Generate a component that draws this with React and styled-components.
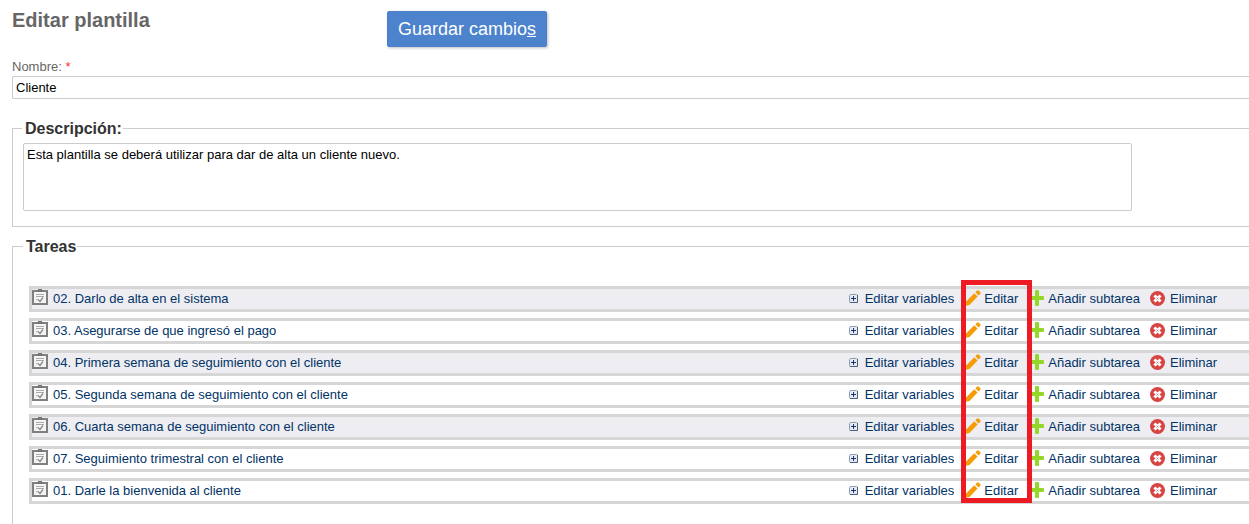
import React from 'react';
import styled, { createGlobalStyle } from 'styled-components';

const GlobalStyle = createGlobalStyle`
  *, *::before, *::after { box-sizing: border-box; }
  body {
    margin: 0;
    background: #fff;
    color: #666;
    font: 13px/16px "Liberation Sans", Arial, sans-serif;
  }
`;

const Form = styled.form`
  display: flex;
  flex-direction: column;
  padding: 8px 0 0 12px;
`;

const Header = styled.header`
  display: flex;
  align-items: flex-start;
  padding-bottom: 11px;
`;

const Title = styled.h1`
  flex: 0 0 375px;
  margin: 0;
  color: #666;
  font-size: 20px;
  line-height: 24px;
`;

const SaveButton = styled.button`
  height: 36px;
  margin-top: 3px;
  padding: 0 10px;
  border: 1px solid #4b80cc;
  border-radius: 2px;
  background: #4d82cd;
  box-shadow: 1px 1px 3px rgba(0, 0, 0, 0.25);
  color: #fff;
  font: 18px/24px "Liberation Sans", Arial, sans-serif;
  white-space: nowrap;
  cursor: pointer;
`;

const Label = styled.label`
  line-height: 18px;
`;

const Required = styled.span`
  color: #f33;
`;

const NameInput = styled.input`
  width: 100%;
  height: 23px;
  padding: 0 3px;
  border: 1px solid #ccc;
  border-right: 0;
  border-radius: 2px 0 0 2px;
  background: #fff;
  color: #000;
  font: inherit;
`;

const Group = styled.fieldset`
  min-width: 0;
  margin: ${(p) => p.$top}px 0 0;
  padding: ${(p) => p.$pad};
  border: 1px solid #ccc;
  border-right: 0;
  ${(p) => p.$open && 'border-bottom: 0;'}
`;

const Legend = styled.legend`
  margin-left: ${(p) => p.$indent}px;
  padding: 2px 1px 0 3px;
  color: #333;
  font-size: 16px;
  font-weight: bold;
  line-height: 18px;
`;

const Description = styled.textarea`
  display: block;
  width: calc(100% - 117px);
  height: 68px;
  padding: 3px;
  border: 1px solid #ccc;
  border-radius: 2px;
  background: #fff;
  color: #000;
  font: inherit;
  resize: none;
`;

const TaskList = styled.ul`
  position: relative;
  display: flex;
  flex-direction: column;
  gap: 6px;
  margin: 0;
  padding: 0;
  list-style: none;
`;

const TaskRow = styled.li`
  display: flex;
  align-items: center;
  justify-content: space-between;
  height: 26px;
  padding-right: 32px;
  border: 3px solid #d6d6d6;
  border-right: 0;
  background: ${(p) => (p.$shaded ? '#eeedf2' : '#fff')};
`;

const TaskLink = styled.a`
  display: flex;
  align-items: flex-start;
  gap: 5px;
  height: 20px;
  color: #036;
  line-height: 20px;
  text-decoration: none;
`;

const Actions = styled.div`
  display: flex;
  gap: 11px;
`;

const ActionLink = styled.a`
  display: flex;
  align-items: flex-start;
  gap: 3px;
  color: #036;
  line-height: 20px;
  text-decoration: none;
  white-space: nowrap;

  svg {
    margin-top: 1px;
    overflow: visible;
  }
`;

const Highlight = styled.li`
  position: absolute;
  top: -6px;
  right: 217px;
  bottom: 1px;
  width: 71px;
  border: 5px solid #ed1c24;
  pointer-events: none;
`;

const ClipboardIcon = () => (
  <svg width="16" height="16" viewBox="0 0 16 16" aria-hidden="true">
    <path d="M1 2h14v13H1z" fill="#f4f4f6" stroke="#808080" strokeWidth="2" />
    <path d="M5 1h1V0h4v1h1v2H5z" fill="#777" />
    <path d="M4 5.500h8M4 7.500h8" stroke="#aaa" />
    <path d="M4 10.500h2" stroke="#bbb" />
    <path d="M6 10.500l2 2 3-4" fill="none" stroke="#888" strokeWidth="1.300" />
  </svg>
);

const ExpandIcon = () => (
  <svg width="16" height="16" viewBox="0 0 16 16" aria-hidden="true">
    <rect x="3.500" y="4.500" width="8" height="8" rx="1" fill="#e5eaf2" stroke="#8f9bb2" />
    <path d="M11.500 5v7.500H4" fill="none" stroke="#4c5c7b" />
    <path d="M5 8.500h5M7.500 6v5" stroke="#173464" />
  </svg>
);

const PencilIcon = () => (
  <svg width="16" height="16" viewBox="0 0 16 16" aria-hidden="true">
    <path d="M0 16l1-4.500L9.300 3.200l3.300 3.300L4.500 15z" fill="#f49c09" />
    <path d="M10.300 2.200L11.800.7q1-.9 2 0l1.400 1.400q.9 1 0 2L13.700 5.600z" fill="#f49c09" />
  </svg>
);

const PlusIcon = () => (
  <svg width="16" height="16" viewBox="0 0 16 16" aria-hidden="true">
    <path d="M7 0h2q1 0 1 1v5h4q1 0 1 1v2q0 1-1 1h-4v5q0 1-1 1H7q-1 0-1-1v-5H0V6h6V1q0-1 1-1z" fill="#92d927" />
  </svg>
);

const RemoveIcon = () => (
  <svg width="16" height="16" viewBox="0 0 16 16" aria-hidden="true">
    <circle cx="6.500" cy="8.500" r="7.500" fill="#d64543" />
    <path d="M4.500 6.500l4 4M8.500 6.500l-4 4" stroke="#fff" strokeWidth="3" strokeLinecap="square" />
    <path d="M5.500 7.500l2 2M7.500 7.500l-2 2" stroke="#d64543" strokeWidth="0.500" />
  </svg>
);

const tasks = [
  { name: '02. Darlo de alta en el sistema', shaded: true },
  { name: '03. Asegurarse de que ingresó el pago' },
  { name: '04. Primera semana de seguimiento con el cliente', shaded: true },
  { name: '05. Segunda semana de seguimiento con el cliente' },
  { name: '06. Cuarta semana de seguimiento con el cliente', shaded: true },
  { name: '07. Seguimiento trimestral con el cliente' },
  { name: '01. Darle la bienvenida al cliente' },
];

const actions = [
  { label: 'Editar variables', Icon: ExpandIcon },
  { label: 'Editar', Icon: PencilIcon },
  { label: 'Añadir subtarea', Icon: PlusIcon },
  { label: 'Eliminar', Icon: RemoveIcon },
];

export default function App() {
  return (
    <>
      <GlobalStyle />
      <Form onSubmit={(e) => e.preventDefault()}>
        <Header>
          <Title>Editar plantilla</Title>
          <SaveButton type="submit" accessKey="s">
            Guardar cambio<u>s</u>
          </SaveButton>
        </Header>
        <Label htmlFor="nombre">
          Nombre: <Required>*</Required>
        </Label>
        <NameInput id="nombre" type="text" required defaultValue="Cliente" />

        <Group $top={19} $pad="5px 0 15px 10px">
          <Legend id="descripcion" $indent={-1}>Descripción:</Legend>
          <Description
            aria-labelledby="descripcion"
            defaultValue="Esta plantilla se deberá utilizar para dar de alta un cliente nuevo."
          />
        </Group>

        <Group $top={9} $pad="30px 0 20px 16px" $open>
          <Legend $indent={-6}>Tareas</Legend>
          <TaskList>
            {tasks.map((task) => (
              <TaskRow key={task.name} $shaded={task.shaded}>
                <TaskLink href="#">
                  <ClipboardIcon />
                  {task.name}
                </TaskLink>
                <Actions>
                  {actions.map(({ label, Icon }) => (
                    <ActionLink key={label} href="#">
                      <Icon />
                      {label}
                    </ActionLink>
                  ))}
                </Actions>
              </TaskRow>
            ))}
            <Highlight aria-hidden="true" />
          </TaskList>
        </Group>
      </Form>
    </>
  );
}
